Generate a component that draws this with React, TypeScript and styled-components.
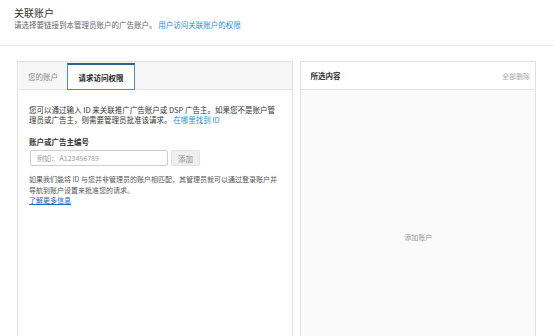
import styled, { createGlobalStyle } from "styled-components";

const GlobalStyle = createGlobalStyle`
  html, body {
    margin: 0;
    padding: 0;
    background: #fff;
    font-family: "Noto Sans CJK SC", "Noto Sans", sans-serif;
    color: #333;
    overflow: hidden;
  }
`;

const PageHeader = styled.header`
  padding: 6px 14px 0;
  height: 39px;
  border-bottom: 1px solid #ebebeb;
`;

const Title = styled.h1`
  margin: 0;
  font-size: 10px;
  font-weight: 400;
  line-height: 14px;
  color: #333;
`;

const Subtitle = styled.p`
  margin: 0;
  font-size: 7.5px;
  line-height: 10px;
  color: #666;
`;

const Link = styled.a<{ $underline?: boolean }>`
  color: ${({ $underline }) => ($underline ? "#1669c7" : "#2a8ed8")};
  text-decoration: ${({ $underline }) => ($underline ? "underline" : "none")};
  cursor: pointer;
`;

const Main = styled.main`
  display: flex;
  gap: 7px;
  padding: 15px 18px 0 17px;
`;

const Panel = styled.section<{ $width: number; $muted?: boolean }>`
  width: ${({ $width }) => $width}px;
  height: 324px;
  box-sizing: border-box;
  border: 1px solid #e0e0e0;
  background: ${({ $muted }) => ($muted ? "#fafafa" : "#fff")};
  display: flex;
  flex-direction: column;
`;

const TabBar = styled.div`
  display: flex;
  align-items: flex-end;
  height: 27px;
  background: #f7f7f7;
  border-bottom: 1px solid #e3e3e3;
  padding-left: 10px;
`;

const Tab = styled.div<{ $active?: boolean }>`
  box-sizing: border-box;
  height: ${({ $active }) => ($active ? "27px" : "26px")};
  display: flex;
  align-items: center;
  justify-content: center;
  white-space: nowrap;
  font-size: 7.5px;
  padding: ${({ $active }) => ($active ? "0" : "0 9px 0 0")};
  margin-bottom: ${({ $active }) => ($active ? "-1px" : "0")};
  color: ${({ $active }) => ($active ? "#222" : "#888")};
  font-weight: ${({ $active }) => ($active ? 700 : 400)};
  background: ${({ $active }) => ($active ? "#fff" : "transparent")};
  border: ${({ $active }) => ($active ? "1px solid #4a8fca" : "none")};
  border-top: ${({ $active }) => ($active ? "2px solid #2c5f8e" : "none")};
  width: ${({ $active }) => ($active ? "68px" : "auto")};
`;

const PanelBody = styled.div`
  padding: 15px 11px 9px;
`;

const Text = styled.p`
  margin: 0;
  font-size: 7.5px;
  line-height: 10px;
  color: #333;
`;

const FieldLabel = styled.div`
  margin-top: 12px;
  font-size: 7.5px;
  line-height: 10px;
  font-weight: 700;
  color: #333;
`;

const FieldRow = styled.div`
  display: flex;
  gap: 3px;
  margin-top: 3px;
  margin-left: 1px;
`;

const Input = styled.input`
  box-sizing: border-box;
  width: 138px;
  height: 16px;
  border: 1px solid #cfcfcf;
  border-radius: 2px;
  padding: 0 6px;
  font-family: inherit;
  font-size: 7px;
  color: #333;
  outline: none;

  &::placeholder {
    color: #9a9a9a;
  }
`;

const AddButton = styled.button`
  box-sizing: border-box;
  width: 29px;
  height: 16px;
  padding: 0;
  border: 1px solid #e2e2e2;
  border-radius: 2px;
  background: #efefef;
  font-family: inherit;
  font-size: 7.5px;
  color: #888;
`;

const HelpText = styled.div`
  margin-top: 8px;
  font-size: 7px;
  line-height: 10.5px;
  color: #555;
`;

const PanelHeader = styled.div`
  display: flex;
  align-items: center;
  justify-content: space-between;
  height: 27px;
  padding: 0 5px 0 9px;
  background: #fff;
  border-bottom: 1px solid #e3e3e3;
`;

const PanelTitle = styled.span`
  font-size: 7.5px;
  font-weight: 700;
  color: #333;
`;

const ClearAll = styled.span`
  font-size: 7px;
  color: #aaa;
`;

const EmptyState = styled.div`
  flex: 1;
  display: flex;
  align-items: center;
  justify-content: center;
  font-size: 7px;
  color: #999;
`;

export default function App() {
  return (
    <>
      <GlobalStyle />
      <PageHeader>
        <Title>关联账户</Title>
        <Subtitle>
          请选择要链接到本管理员账户的广告账户。 <Link>用户访问关联账户的权限</Link>
        </Subtitle>
      </PageHeader>
      <Main>
        <Panel $width={277}>
          <TabBar>
            <Tab>您的账户</Tab>
            <Tab $active>请求访问权限</Tab>
          </TabBar>
          <PanelBody>
            <Text>
              您可以通过输入 ID 来关联推广广告账户或 DSP 广告主。如果您不是账户管理员或广告主，则需要管理员批准该请求。{" "}
              <Link>在哪里找到 ID</Link>
            </Text>
            <FieldLabel>账户或广告主编号</FieldLabel>
            <FieldRow>
              <Input placeholder="例如： A123456789" />
              <AddButton>添加</AddButton>
            </FieldRow>
            <HelpText>
              如果我们能将 ID 与您并非管理员的账户相匹配，其管理员就可以通过登录账户并导航到账户设置来批准您的请求。
              <br />
              <Link $underline>了解更多信息</Link>
            </HelpText>
          </PanelBody>
        </Panel>
        <Panel $width={236} $muted>
          <PanelHeader>
            <PanelTitle>所选内容</PanelTitle>
            <ClearAll>全部删除</ClearAll>
          </PanelHeader>
          <EmptyState>添加账户</EmptyState>
        </Panel>
      </Main>
    </>
  );
}
